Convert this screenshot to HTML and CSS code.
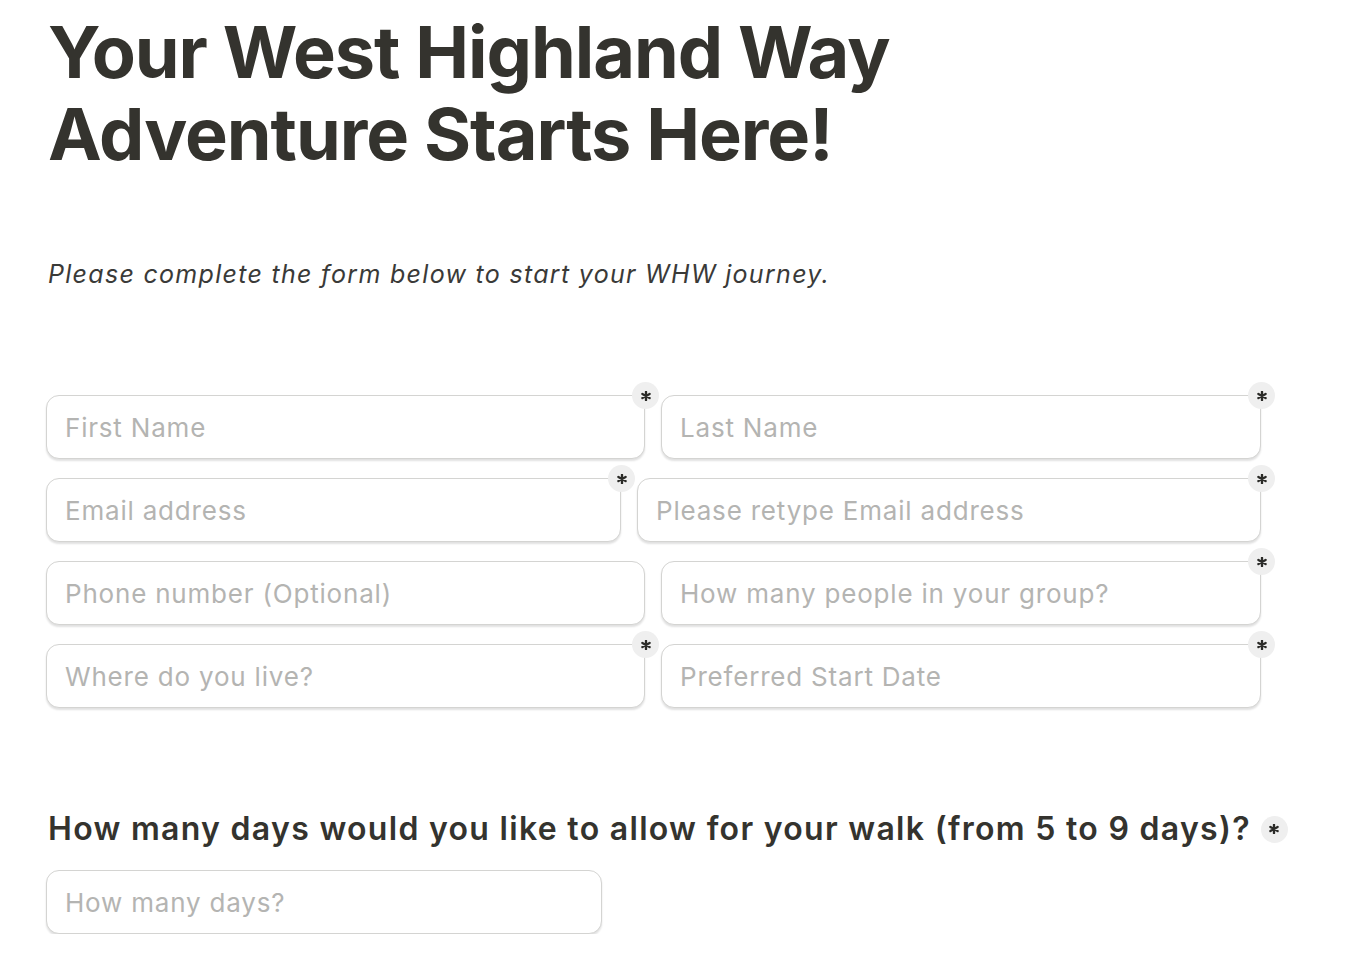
FILE: index.html
```html
<!DOCTYPE html>
<html lang="en">
<head>
<meta charset="utf-8">
<title>West Highland Way</title>
<link rel="stylesheet" href="styles.css">
</head>
<body>
<main class="page">
  <h1 class="title">Your West Highland Way<br>Adventure Starts Here!</h1>
  <p class="intro">Please complete the form below to start your WHW journey.</p>
  <form class="form">
    <div class="row">
      <div class="field"><input type="text" placeholder="First Name"><span class="badge" title="Required"><svg viewBox="0 0 10 10"><path d="M5 0.8V9.2M1.4 2.9L8.6 7.1M1.4 7.1L8.6 2.9"/></svg></span></div>
      <div class="field"><input type="text" placeholder="Last Name"><span class="badge" title="Required"><svg viewBox="0 0 10 10"><path d="M5 0.8V9.2M1.4 2.9L8.6 7.1M1.4 7.1L8.6 2.9"/></svg></span></div>
    </div>
    <div class="row row-email">
      <div class="field"><input type="text" placeholder="Email address"><span class="badge" title="Required"><svg viewBox="0 0 10 10"><path d="M5 0.8V9.2M1.4 2.9L8.6 7.1M1.4 7.1L8.6 2.9"/></svg></span></div>
      <div class="field"><input type="text" placeholder="Please retype Email address"><span class="badge" title="Required"><svg viewBox="0 0 10 10"><path d="M5 0.8V9.2M1.4 2.9L8.6 7.1M1.4 7.1L8.6 2.9"/></svg></span></div>
    </div>
    <div class="row">
      <div class="field"><input type="text" placeholder="Phone number (Optional)"></div>
      <div class="field"><input type="text" placeholder="How many people in your group?"><span class="badge" title="Required"><svg viewBox="0 0 10 10"><path d="M5 0.8V9.2M1.4 2.9L8.6 7.1M1.4 7.1L8.6 2.9"/></svg></span></div>
    </div>
    <div class="row">
      <div class="field"><input type="text" placeholder="Where do you live?"><span class="badge" title="Required"><svg viewBox="0 0 10 10"><path d="M5 0.8V9.2M1.4 2.9L8.6 7.1M1.4 7.1L8.6 2.9"/></svg></span></div>
      <div class="field"><input type="text" placeholder="Preferred Start Date"><span class="badge" title="Required"><svg viewBox="0 0 10 10"><path d="M5 0.8V9.2M1.4 2.9L8.6 7.1M1.4 7.1L8.6 2.9"/></svg></span></div>
    </div>
  </form>
  <h2 class="question"><span>How many days would you like to allow for your walk (from 5 to 9 days)?</span><span class="badge inline" title="Required"><svg viewBox="0 0 10 10"><path d="M5 0.8V9.2M1.4 2.9L8.6 7.1M1.4 7.1L8.6 2.9"/></svg></span></h2>
  <div class="field days"><input type="text" placeholder="How many days?"></div>
</main>
</body>
</html>
```
FILE: styles.css
```css
* { box-sizing: border-box; }
html, body { margin: 0; padding: 0; background: #fff; }
body { font-family: Inter, "Noto Sans", "Liberation Sans", sans-serif; color: #34332e; }
.page { padding: 11px 0 0 46px; width: 1366px; }
.title {
  margin: 0 0 0 2px;
  font-size: 72px;
  line-height: 82px;
  font-weight: 700;
  letter-spacing: -1.05px;
  color: #34332e;
}
.intro {
  margin: 81px 0 0 2px;
  font-size: 25px;
  line-height: 36px;
  font-style: italic;
  letter-spacing: 1.3px;
  color: #3a3a38;
}
.form { margin-top: 103px; width: 1215px; display: flex; flex-direction: column; gap: 19px; }
.row { display: flex; gap: 16px; }
.row .field { flex: 0 0 599px; }
.row .field + .field { flex: 0 0 600px; }
.row-email .field { flex: 0 0 575px; }
.row-email .field + .field { flex: 0 0 624px; }
.field { position: relative; height: 64px; }
.field input {
  display: block;
  width: 100%;
  height: 100%;
  border: 1px solid #d4d4d2;
  border-radius: 13px;
  background: #fff;
  box-shadow: 0 2px 2px rgba(0,0,0,0.12);
  padding: 0 18px;
  font-family: inherit;
  font-size: 26px;
  letter-spacing: 0.8px;
  color: #34332e;
  outline: none;
}
.field input::placeholder { color: #b4b4b2; }
.badge {
  position: absolute;
  top: -13px;
  right: -14px;
  width: 27px;
  height: 27px;
  border-radius: 50%;
  background: #efefef;
  display: flex;
  align-items: center;
  justify-content: center;
}
.badge svg {
  width: 10px;
  height: 10px;
  fill: none;
  stroke: #2b2b28;
  stroke-width: 2.3;
  stroke-linecap: round;
}
.question {
  margin: 101px 0 0 2px;
  font-size: 32px;
  line-height: 40px;
  font-weight: 600;
  letter-spacing: 1.3px;
  color: #34332e;
  display: flex;
  align-items: center;
  gap: 10px;
}
.badge.inline { position: static; flex: 0 0 27px; }
.days { margin-top: 21px; width: 556px; }
```
